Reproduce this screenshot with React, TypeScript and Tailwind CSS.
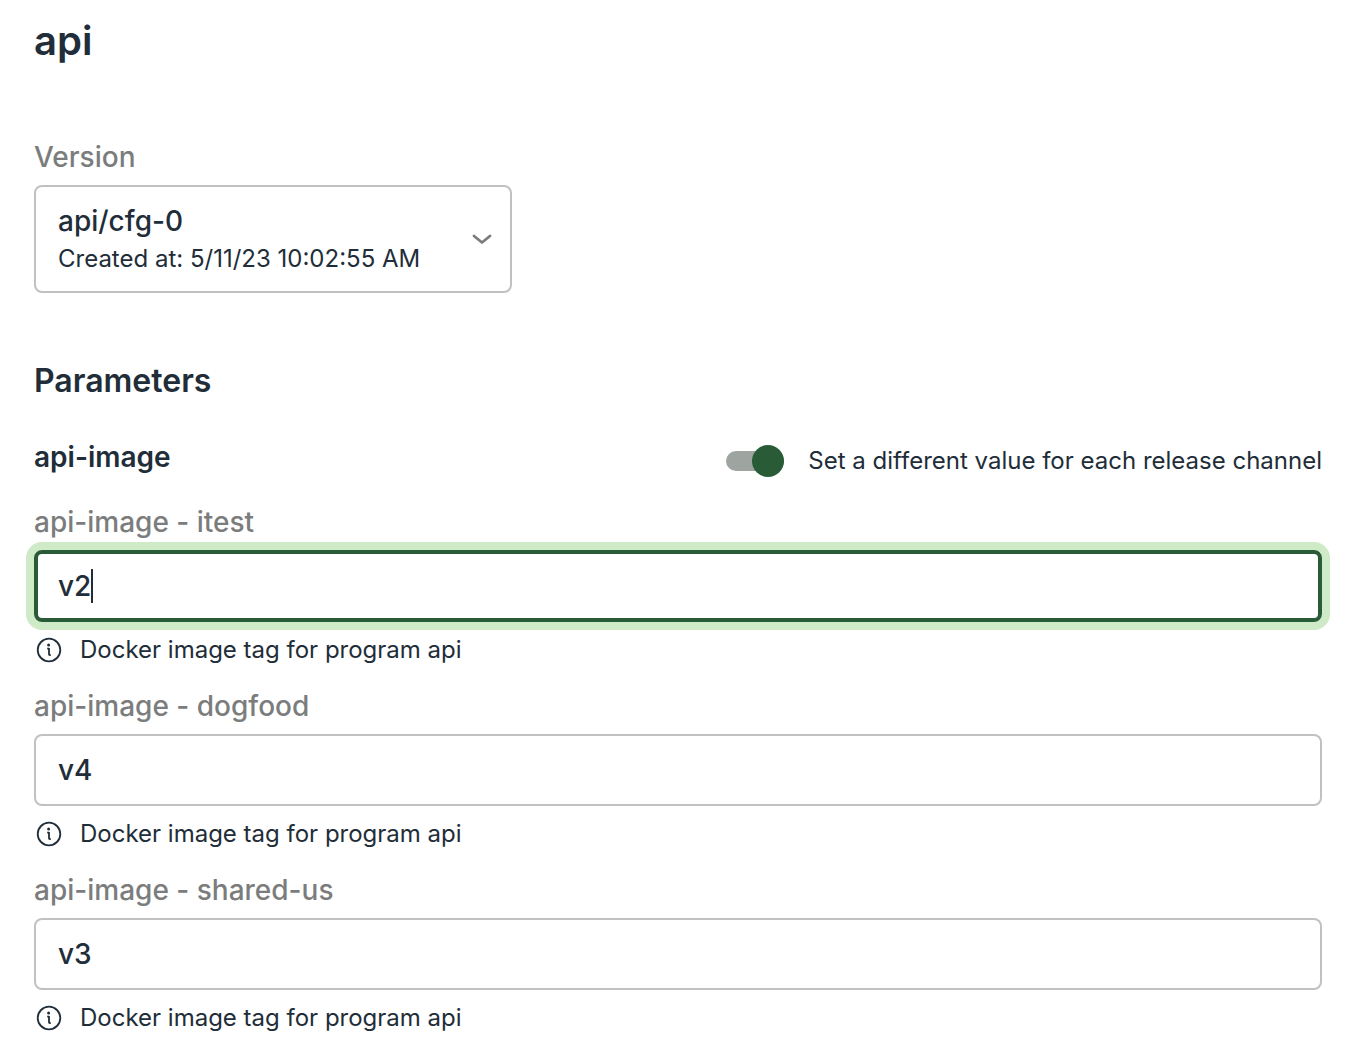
import { useState } from "react";

const channels = [
  { name: "itest", initial: "v2" },
  { name: "dogfood", initial: "v4" },
  { name: "shared-us", initial: "v3" },
];

function InfoIcon() {
  return (
    <svg className="size-7 shrink-0" viewBox="0 0 28 28" fill="none" stroke="currentColor" strokeWidth="1.8" aria-hidden="true">
      <circle cx="14" cy="14" r="11.3" />
      <circle cx="13.6" cy="8.9" r="1.5" fill="currentColor" stroke="none" />
      <path d="M12.2 12.6H14v5.6c0 .6.3.8.8.8h.9" strokeLinejoin="round" />
    </svg>
  );
}

function VersionSelect() {
  return (
    <div className="w-[478px] max-w-full">
      <label htmlFor="version" className="block text-[28px] leading-10 font-medium text-[#7b7d7d]">
        Version
      </label>
      <div className="relative mt-2 flex items-center justify-between rounded-lg border-2 border-[#c1c1c1] py-3.5 pr-4 pl-[22px] focus-within:border-[#285b36]">
        <div aria-hidden="true">
          <div className="text-[28px] leading-10 font-medium">api/cfg-0</div>
          <div className="text-2xl leading-9">Created at: 5/11/23 10:02:55 AM</div>
        </div>
        <svg className="size-6" viewBox="0 0 24 24" fill="none" stroke="#7b7d7d" strokeWidth="2.8" strokeLinecap="round" strokeLinejoin="round" aria-hidden="true">
          <path d="M4 9l8 6.5L20 9" />
        </svg>
        <select id="version" className="absolute inset-0 size-full cursor-pointer opacity-0">
          <option>api/cfg-0</option>
        </select>
      </div>
    </div>
  );
}

function ChannelField({ name, initial, active, onActivate }: { name: string; initial: string; active: boolean; onActivate: () => void }) {
  const [value, setValue] = useState(initial);
  const id = `api-image-${name}`;
  return (
    <div>
      <label htmlFor={id} className="block text-[28px] leading-10 font-medium text-[#7b7d7d]">
        api-image - {name}
      </label>
      <div className="relative mt-2">
        <input
          id={id}
          type="text"
          value={value}
          onChange={(e) => setValue(e.target.value)}
          onFocus={onActivate}
          aria-describedby={`${id}-help`}
          className={
            active
              ? "block h-[72px] w-full rounded-lg border-4 border-[#285b36] px-5 text-[28px] font-medium caret-transparent ring-8 ring-[#cfeac6] outline-none"
              : "block h-[72px] w-full rounded-lg border-2 border-[#c1c1c1] px-[22px] text-[28px] font-medium outline-none"
          }
        />
        {active && (
          <div className="pointer-events-none absolute inset-0 flex items-center overflow-hidden px-6 text-[28px] font-medium" aria-hidden="true">
            <span className="invisible whitespace-pre">{value}</span>
            <span className="h-[34px] w-0.5 bg-[#212d38]" />
          </div>
        )}
      </div>
      <p id={`${id}-help`} className="mt-2 flex items-center gap-[17px] pl-px text-2xl leading-10">
        <InfoIcon />
        Docker image tag for program api
      </p>
    </div>
  );
}

export default function App() {
  const [perChannel, setPerChannel] = useState(true);
  const [active, setActive] = useState("itest");
  return (
    <main className="min-h-screen bg-white pt-4 pr-[30px] pl-[34px] font-['Inter',sans-serif] text-[#212d38]">
      <h1 className="text-[40px] leading-[50px] font-semibold">api</h1>
      <div className="mt-[71px]">
        <VersionSelect />
      </div>
      <h2 className="mt-[68px] text-[32px] leading-10 font-semibold">Parameters</h2>
      <div className="mt-9 flex items-start justify-between">
        <h3 className="text-[28px] leading-10 font-semibold">api-image</h3>
        <label className="flex cursor-pointer items-center gap-6 text-2xl leading-[48px]">
          <span className="relative flex h-8 w-[58px] items-center">
            <input
              type="checkbox"
              role="switch"
              checked={perChannel}
              onChange={(e) => setPerChannel(e.target.checked)}
              className="peer absolute inset-0 size-full cursor-pointer appearance-none"
            />
            <span className="pointer-events-none h-5 w-full rounded-full bg-[#9ea5a1]" />
            <span className="pointer-events-none absolute left-0 size-8 rounded-full bg-[#8b918d] peer-checked:right-0 peer-checked:left-auto peer-checked:bg-[#285b36]" />
          </span>
          Set a different value for each release channel
        </label>
      </div>
      <div className="mt-[17px] flex flex-col gap-4">
        {channels.map((c) => (
          <ChannelField key={c.name} name={c.name} initial={c.initial} active={active === c.name} onActivate={() => setActive(c.name)} />
        ))}
      </div>
    </main>
  );
}
